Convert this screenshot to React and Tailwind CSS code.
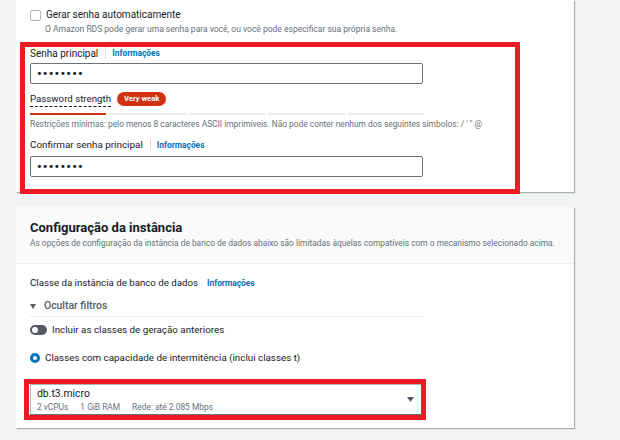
import React from "react";

const font = { fontFamily: "Roboto, 'Liberation Sans', Arial, sans-serif" };

function Info({ children }) {
  return (
    <span className="flex items-center">
      <span className="ml-[7px] mr-[6px] h-[12px] w-px bg-[#d5dbdb]" />
      <span className="text-[8.4px] font-bold text-[#0073bb]">{children}</span>
    </span>
  );
}

function Dots() {
  return (
    <div className="flex h-[21px] items-center rounded-[2px] border border-[#687078] bg-white pl-[6px]">
      <span className="text-[13px] font-bold leading-[13px] tracking-[1.2px] text-[#16191f]">••••••••</span>
    </div>
  );
}

export default function App() {
  return (
    <div className="relative h-[440px] w-[620px] overflow-hidden bg-[#f2f3f3] text-[#16191f]" style={font}>
      {/* top card */}
      <div className="ml-[16px] w-[558px] bg-white pl-[14px] pt-[7px] pb-[15px] shadow-[1px_1px_1px_0_rgba(0,28,36,0.3)]">
        <div className="flex h-[16px] items-center">
          <span className="h-[11px] w-[11px] rounded-[2px] border border-[#aab7b8] bg-white" />
          <span className="ml-[5px] text-[10px] leading-[16px]">Gerar senha automaticamente</span>
        </div>
        <div className="pl-[15px] text-[8.5px] leading-[12px] text-[#687078]">
          O Amazon RDS pode gerar uma senha para você, ou você pode especificar sua própria senha.
        </div>
        <div className="mt-[10px] flex h-[16px] items-center">
          <span className="text-[10px]">Senha principal</span>
          <Info>Informações</Info>
        </div>
        <div className="mt-[2px] w-[393px]">
          <Dots />
        </div>
        <div className="mt-[8px] flex h-[14px] items-center">
          <span className="border-b border-dashed border-[#16191f] text-[9.7px] leading-[15px]">Password strength</span>
          <span className="ml-[6px] flex h-[14px] items-center rounded-full bg-[#d13212] px-[7px] text-[7.6px] font-bold text-white">
            Very weak
          </span>
        </div>
        <div className="mt-[7px] flex w-[394px] gap-[3px]">
          <div className="h-[2px] flex-1 bg-[#d13212]" />
          <div className="h-[2px] flex-1 bg-[#eaeded]" />
          <div className="h-[2px] flex-1 bg-[#eaeded]" />
          <div className="h-[2px] flex-1 bg-[#eaeded]" />
          <div className="h-[2px] flex-1 bg-[#eaeded]" />
        </div>
        <div className="mt-[3px] text-[8.4px] leading-[12px] text-[#687078]">
          Restrições mínimas: pelo menos 8 caracteres ASCII imprimíveis. Não pode conter nenhum dos seguintes símbolos: / ' " @
        </div>
        <div className="mt-[7px] flex h-[16px] items-center">
          <span className="text-[9.9px]">Confirmar senha principal</span>
          <Info>Informações</Info>
        </div>
        <div className="mt-[3px] w-[393px]">
          <Dots />
        </div>
      </div>

      {/* bottom card */}
      <div className="ml-[16px] mt-[15px] w-[558px] bg-white shadow-[1px_1px_1px_0_rgba(0,28,36,0.3)]">
        <div className="border-b border-[#eaeded] bg-[#fafafa] pl-[14px] pt-[12px] pb-[14px]">
          <div className="text-[13px] font-bold leading-[18px]">Configuração da instância</div>
          <div className="text-[8.4px] leading-[12px] text-[#687078]">
            As opções de configuração da instância de banco de dados abaixo são limitadas àquelas compatíveis com o mecanismo selecionado acima.
          </div>
        </div>
        <div className="pl-[14px] pt-[11px] pb-[13px]">
          <div className="flex h-[16px] items-center">
            <span className="text-[9.7px]">Classe da instância de banco de dados</span>
            <span className="ml-[9px] text-[8.4px] font-bold text-[#0073bb]">Informações</span>
          </div>
          <div className="mt-[7px] flex h-[16px] items-center">
            <svg width="6" height="5" viewBox="0 0 6 5" className="mr-[8px]">
              <path d="M0 0 H6 L3 5 Z" fill="#545b64" />
            </svg>
            <span className="text-[10.4px] font-medium text-[#545b64]">Ocultar filtros</span>
          </div>
          <div className="mt-[2px] h-px w-[393px] bg-[#eaeded]" />
          <div className="mt-[5px] flex h-[16px] items-center">
            <span className="flex h-[10px] w-[17px] items-center rounded-full bg-[#545b64] pl-[2px]">
              <span className="h-[6px] w-[6px] rounded-full bg-white" />
            </span>
            <span className="ml-[5px] text-[9.8px]">Incluir as classes de geração anteriores</span>
          </div>
          <div className="mt-[12px] flex h-[16px] items-center">
            <span className="h-[10px] w-[10px] rounded-full border-[3px] border-[#0073bb] bg-white" />
            <span className="ml-[5px] text-[9.8px]">Classes com capacidade de intermitência (inclui classes t)</span>
          </div>
          <div className="mt-[18px] flex h-[31px] w-[393px] items-center border border-[#aab7b8] border-b-[#687078] bg-white pl-[6px] pr-[8px]">
            <div className="flex-1">
              <div className="text-[10.4px] leading-[14px]">db.t3.micro</div>
              <div className="flex gap-[12px] text-[8.4px] leading-[12px] text-[#687078]">
                <span>2 vCPUs</span>
                <span>1 GiB RAM</span>
                <span>Rede: até 2.085 Mbps</span>
              </div>
            </div>
            <svg width="7" height="5" viewBox="0 0 7 5">
              <path d="M0 0 H7 L3.5 5 Z" fill="#545b64" />
            </svg>
          </div>
        </div>
      </div>

      {/* annotation boxes */}
      <div className="pointer-events-none absolute left-[20px] top-[42px] h-[152px] w-[500px] border-[5px] border-[#ed1c24]" />
      <div className="pointer-events-none absolute left-[24px] top-[379px] h-[41px] w-[402px] border-[5px] border-[#ed1c24]" />
    </div>
  );
}
